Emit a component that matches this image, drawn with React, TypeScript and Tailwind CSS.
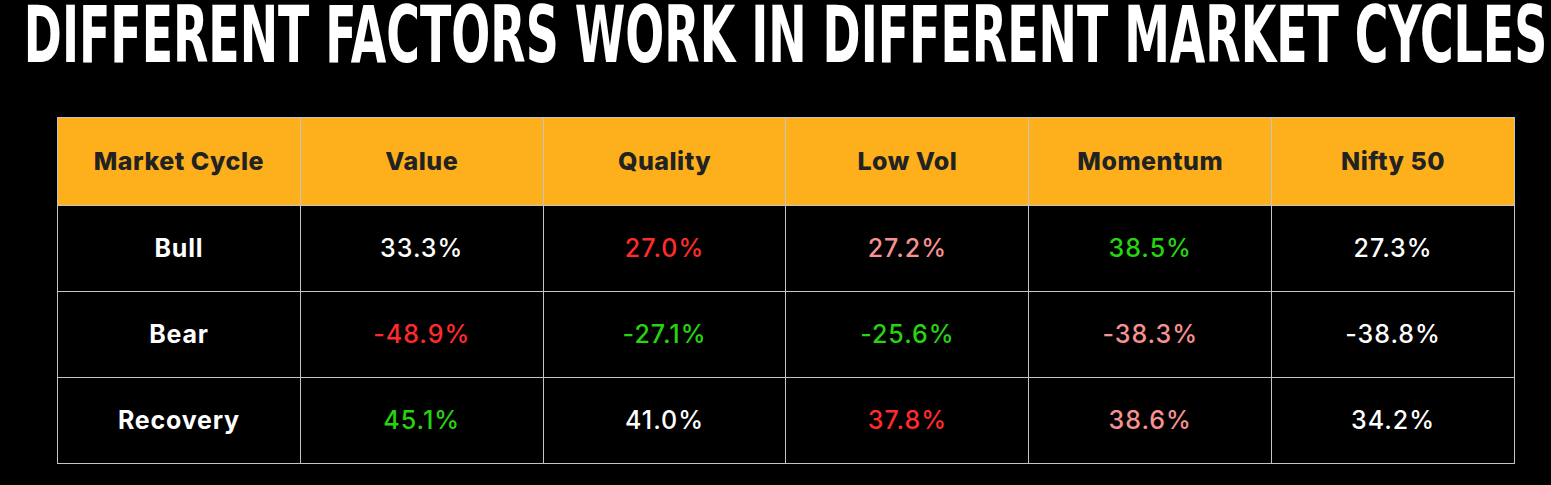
const columns = ["Market Cycle", "Value", "Quality", "Low Vol", "Momentum", "Nifty 50"];

type Cell = { v: string; c: string };

const W = "text-white";
const R = "text-[#ff2b2b]";
const P = "text-[#f79191]";
const G = "text-[#26d40f]";

const rows: { name: string; cells: Cell[] }[] = [
  {
    name: "Bull",
    cells: [
      { v: "33.3%", c: W },
      { v: "27.0%", c: R },
      { v: "27.2%", c: P },
      { v: "38.5%", c: G },
      { v: "27.3%", c: W },
    ],
  },
  {
    name: "Bear",
    cells: [
      { v: "-48.9%", c: R },
      { v: "-27.1%", c: G },
      { v: "-25.6%", c: G },
      { v: "-38.3%", c: P },
      { v: "-38.8%", c: W },
    ],
  },
  {
    name: "Recovery",
    cells: [
      { v: "45.1%", c: G },
      { v: "41.0%", c: W },
      { v: "37.8%", c: R },
      { v: "38.6%", c: P },
      { v: "34.2%", c: W },
    ],
  },
];

const App = () => {
  return (
    <div className="w-[1551px] h-[485px] bg-black overflow-hidden font-['Inter',sans-serif]">
      <h1 className="h-[70px] pl-[20px] flex justify-center items-start">
        <span className="inline-block origin-top whitespace-nowrap scale-y-[1.55] text-white font-bold text-[51px] leading-[45px] font-['DejaVu_Sans_Condensed','DejaVu_Sans',sans-serif]">
          DIFFERENT FACTORS WORK IN DIFFERENT MARKET CYCLES
        </span>
      </h1>
      <div className="pt-[47px] pl-[57px]">
        <table className="w-[1458px] border-collapse table-fixed">
          <thead>
            <tr className="h-[88px] bg-[#fdb01b]">
              {columns.map((c) => (
                <th
                  key={c}
                  className="border border-[#c4c4c4] text-[#222] text-[25px] tracking-[0.5px] font-extrabold text-center"
                >
                  {c}
                </th>
              ))}
            </tr>
          </thead>
          <tbody>
            {rows.map((r) => (
              <tr key={r.name} className="h-[86px]">
                <td className="border-[1.5px] border-[#c4c4c4] text-white text-[25px] tracking-[0.8px] font-bold text-center">
                  {r.name}
                </td>
                {r.cells.map((cell, i) => (
                  <td
                    key={i}
                    className={`border-[1.5px] border-[#c4c4c4] text-[25px] tracking-[1px] font-medium text-center ${cell.c}`}
                  >
                    {cell.v}
                  </td>
                ))}
              </tr>
            ))}
          </tbody>
        </table>
      </div>
    </div>
  );
};

export default App;
